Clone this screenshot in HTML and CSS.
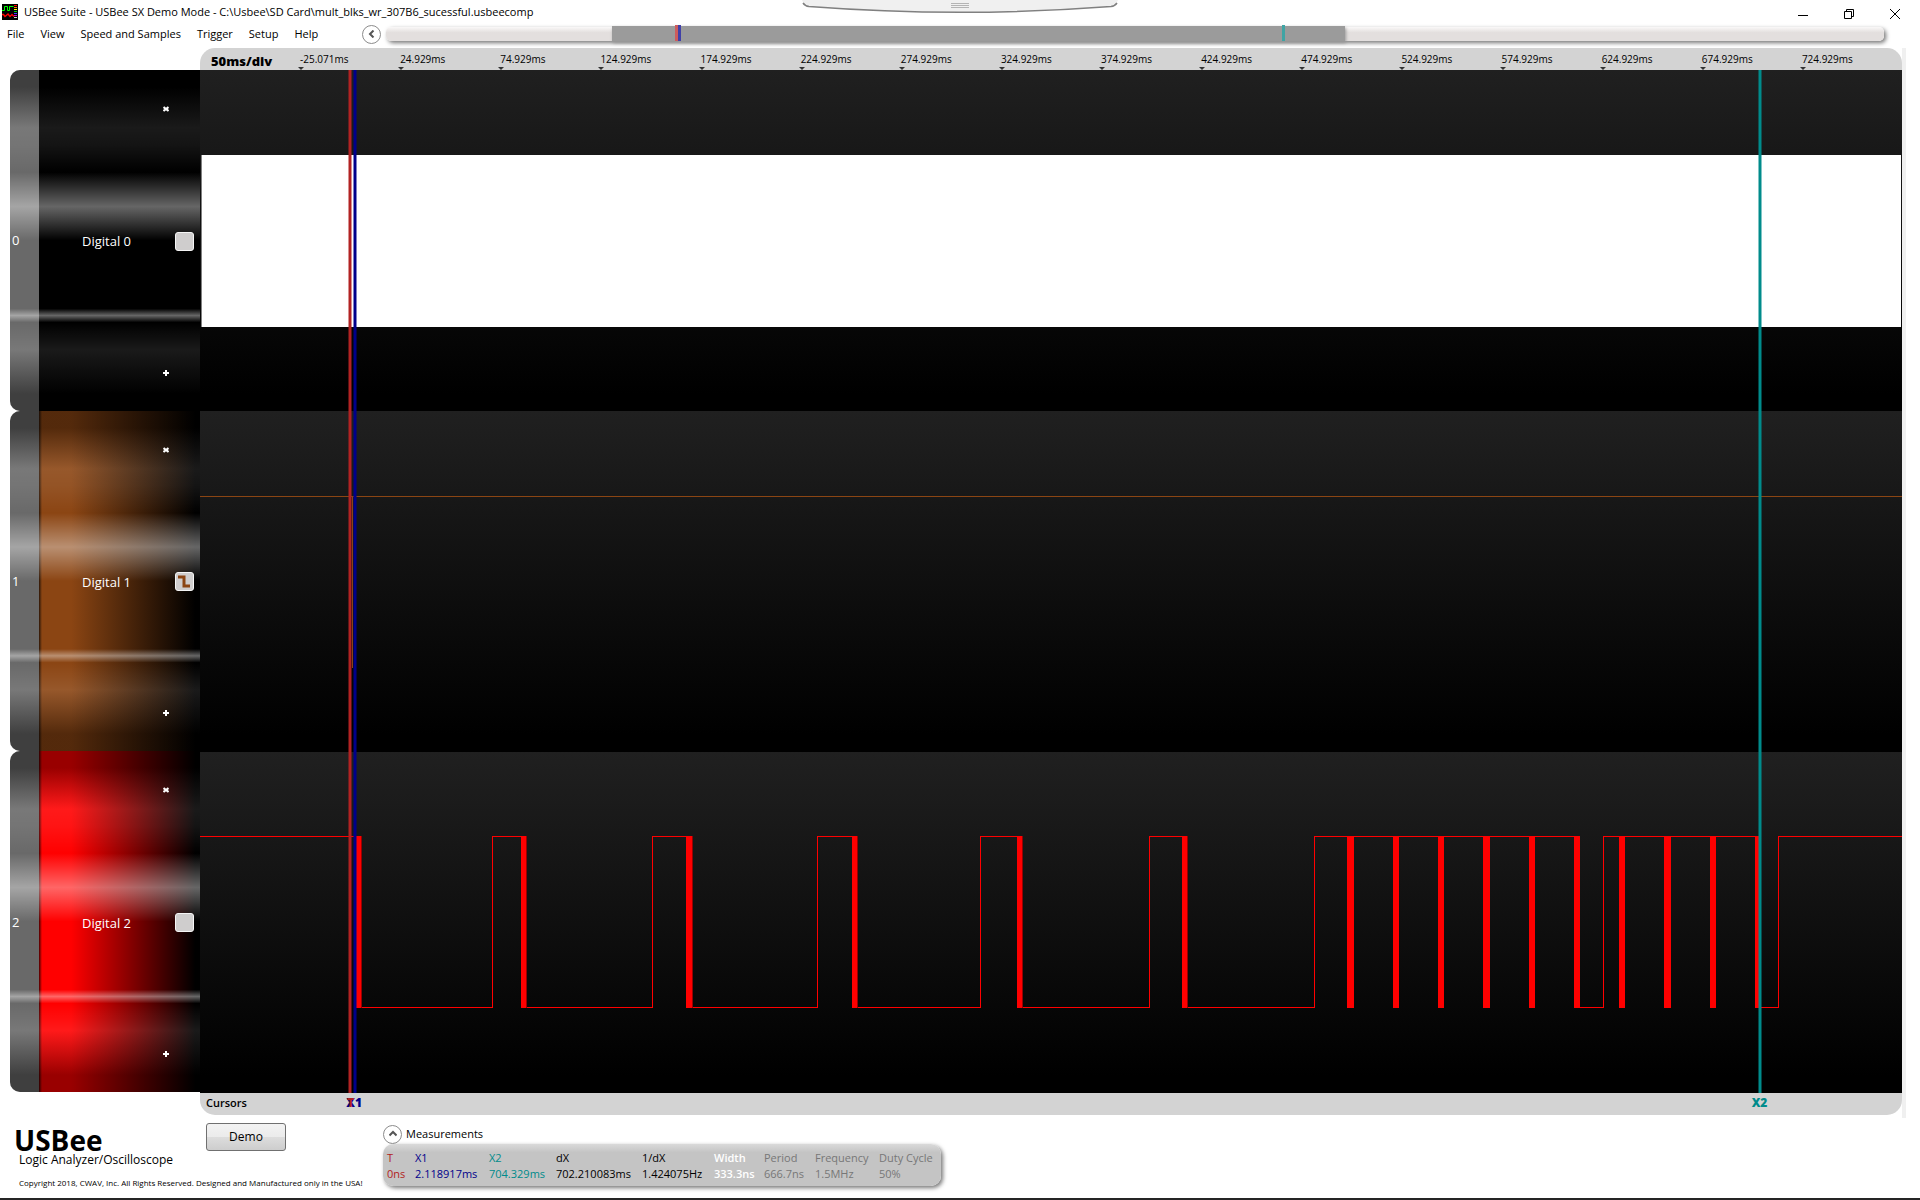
FILE: index.html
```html
<!DOCTYPE html>
<html lang="en">
<head>
<meta charset="utf-8">
<title>USBee Suite</title>
<link rel="stylesheet" href="styles.css">
</head>
<body>
<header class="titlebar">
  <svg class="app-icon" viewBox="0 0 16 16" aria-hidden="true">
    <rect width="16" height="16" fill="#000"/>
    <path d="M0 6.5h2.5v-4h3v4h2v-4h4" fill="none" stroke="#0f0"/>
    <path d="M0 10.500l1.500 0 1.500 2 3-2.500 2 2.500 2-2 2 2" fill="none" stroke="#f00" stroke-width="1.400"/>
    <path d="M12 1.500h3" stroke="#f00"/><path d="M12 3.500h3" stroke="#f80"/><path d="M12 5.500h3" stroke="#ff0"/>
    <path d="M12 7.500h3" stroke="#0c0"/><path d="M12 9.500h3" stroke="#44f"/><path d="M12 11.500h3" stroke="#c0c"/><path d="M12 13.500h3" stroke="#ccc"/>
  </svg>
  <h1 class="title">USBee Suite - USBee SX Demo Mode - C:\Usbee\SD Card\mult_blks_wr_307B6_sucessful.usbeecomp</h1>
  <div class="window-buttons">
    <button class="window-button" aria-label="Minimize"><svg width="12" height="12" viewBox="0 0 12 12"><path d="M1 7.500h10"/></svg></button>
    <button class="window-button" aria-label="Restore"><svg width="12" height="12" viewBox="0 0 12 12"><path d="M1.500 3.500h7v7h-7zM3.500 3v-1.500h7v7h-1.500"/></svg></button>
    <button class="window-button" aria-label="Close"><svg width="12" height="12" viewBox="0 0 12 12"><path d="M1 1l10 10M11 1l-10 10"/></svg></button>
  </div>
  <svg class="pull-tab" width="316" height="14" viewBox="0 0 316 14" aria-hidden="true">
    <path d="M0 0L2 4Q3 6 7 6.500Q158 18 309 6.500Q313 6 314 4L316 0z" fill="#f0f0f0"/>
    <path d="M1 3Q3 6 7 6.500Q158 18 309 6.500Q313 6 315 3" fill="none" stroke="#808080" stroke-width="1.500"/>
    <path d="M149 3.500h18M149 5.500h18M149 7.500h18" stroke="#b4b4b4"/>
  </svg>
</header>

<div class="toolbar">
  <nav class="menu">
    <button class="menu-item">File</button>
    <button class="menu-item">View</button>
    <button class="menu-item">Speed and Samples</button>
    <button class="menu-item">Trigger</button>
    <button class="menu-item">Setup</button>
    <button class="menu-item">Help</button>
  </nav>
  <button class="round-button" aria-label="Collapse overview"><svg width="8" height="8" viewBox="0 0 8 8"><path d="M5.500 0.500L2 4l3.500 3.500"/></svg></button>
  <div class="overview">
    <div class="overview-thumb" style="left:15.1%;width:48.9%"></div>
    <div class="overview-mark mark-t" style="left:19.3%"></div>
    <div class="overview-mark mark-x1" style="left:19.5%"></div>
    <div class="overview-mark mark-x2" style="left:59.8%"></div>
  </div>
</div>

<main class="workspace">
  <section class="channels" aria-label="Channels">
    <div class="channel black">
      <span class="channel-number">0</span>
      <div class="channel-face">
        <button class="size-button" aria-label="Shrink Digital 0"><svg width="6" height="6" viewBox="0 0 6 6"><path d="M.5 1l5 4M.5 5l5-4"/></svg></button>
        <div class="channel-row"><span>Digital 0</span><button class="trigger-button" aria-label="Trigger on Digital 0"></button></div>
        <button class="size-button" aria-label="Grow Digital 0"><svg width="6" height="6" viewBox="0 0 6 6"><path d="M0 3h6M3 0v6"/></svg></button>
      </div>
    </div>
    <div class="channel brown">
      <span class="channel-number">1</span>
      <div class="channel-face">
        <button class="size-button" aria-label="Shrink Digital 1"><svg width="6" height="6" viewBox="0 0 6 6"><path d="M.5 1l5 4M.5 5l5-4"/></svg></button>
        <div class="channel-row"><span>Digital 1</span><button class="trigger-button" aria-label="Trigger on Digital 1"><svg class="edge" width="15" height="15" viewBox="0 0 15 15"><path d="M1 3h6v9h6"/></svg></button></div>
        <button class="size-button" aria-label="Grow Digital 1"><svg width="6" height="6" viewBox="0 0 6 6"><path d="M0 3h6M3 0v6"/></svg></button>
      </div>
    </div>
    <div class="channel red">
      <span class="channel-number">2</span>
      <div class="channel-face">
        <button class="size-button" aria-label="Shrink Digital 2"><svg width="6" height="6" viewBox="0 0 6 6"><path d="M.5 1l5 4M.5 5l5-4"/></svg></button>
        <div class="channel-row"><span>Digital 2</span><button class="trigger-button" aria-label="Trigger on Digital 2"></button></div>
        <button class="size-button" aria-label="Grow Digital 2"><svg width="6" height="6" viewBox="0 0 6 6"><path d="M0 3h6M3 0v6"/></svg></button>
      </div>
    </div>
  </section>

  <section class="scope" aria-label="Waveforms">
    <div class="ruler">
      <strong class="scale">50ms/div</strong>
      <span class="tick">-25.071ms</span><span class="tick">24.929ms</span><span class="tick">74.929ms</span><span class="tick">124.929ms</span>
      <span class="tick">174.929ms</span><span class="tick">224.929ms</span><span class="tick">274.929ms</span><span class="tick">324.929ms</span>
      <span class="tick">374.929ms</span><span class="tick">424.929ms</span><span class="tick">474.929ms</span><span class="tick">524.929ms</span>
      <span class="tick">574.929ms</span><span class="tick">624.929ms</span><span class="tick">674.929ms</span><span class="tick">724.929ms</span>
    </div>
    <div class="plot">
      <svg class="lane" viewBox="0 0 1702 341" preserveAspectRatio="none">
        <rect x="1" y="85" width="1700" height="172" fill="#808080"/>
        <rect x="2" y="85" width="1699" height="172" fill="#fff"/>
      </svg>
      <svg class="lane" viewBox="0 0 1702 341" preserveAspectRatio="none">
        <path class="wave wave-brown" d="M0 85.500H152.500V256.500V85.500H1702"/>
      </svg>
      <svg class="lane" viewBox="0 1 1702 341" preserveAspectRatio="none">
        <path class="wave wave-red" d="M0 85.500H156.500V256.500H292.500V85.500H321.500V256.500H452.500V85.500H486.500V256.500H617.500V85.500H652.500V256.500H780.500V85.500H817.500V256.500H949.500V85.500H982.500V256.500H1114.500V85.500H1379.500V256.500H1403.500V85.500H1558.500V256.500H1578.500V85.500H1702"/>
        <path class="tail" d="M161 85h1v172h-1zM326 85h1v172h-1zM492 85h1v172h-1zM657 85h1v172h-1zM822 85h1v172h-1zM987 85h1v172h-1z"/>
        <path class="burst" d="M156 85h5v172h-5zM321 85h5v172h-5zM486 85h6v172h-6zM652 85h5v172h-5zM817 85h5v172h-5zM982 85h5v172h-5zM1147 85h7v172h-7zM1193 85h6v172h-6zM1238 85h6v172h-6zM1283 85h7v172h-7zM1329 85h6v172h-6zM1374 85h6v172h-6zM1419 85h6v172h-6zM1464 85h7v172h-7zM1510 85h6v172h-6zM1555 85h4v172h-4z"/>
      </svg>
      <div class="cursor cursor-x1" style="left:9.08%"></div>
      <div class="cursor cursor-t" style="left:8.84%"></div>
      <div class="cursor cursor-x2" style="left:91.63%"></div>
    </div>
    <div class="cursor-bar">
      <span>Cursors</span>
      <b class="cursor-label label-x1" style="left:9.06%">X1</b>
      <b class="cursor-label label-t" style="left:8.84%">T</b>
      <b class="cursor-label label-x2" style="left:91.63%">X2</b>
    </div>
  </section>
</main>

<footer class="footer">
  <div class="brand">
    <div class="brand-name">USBee</div>
    <div class="brand-line">Logic Analyzer/Oscilloscope</div>
    <small class="copyright">Copyright 2018, CWAV, Inc. All Rights Reserved. Designed and Manufactured only in the USA!</small>
  </div>
  <button class="demo-button">Demo</button>
  <section class="measurements">
    <div class="measurements-head">
      <button class="round-button" aria-label="Collapse measurements"><svg width="8" height="8" viewBox="0 0 8 8"><path d="M0.500 5.500L4 2l3.500 3.500"/></svg></button>
      <span>Measurements</span>
    </div>
    <div class="measurements-panel">
      <table class="measure-table">
        <colgroup><col class="w-t"><col class="w-x1"><col class="w-x2"><col class="w-dx"><col class="w-inv"><col class="w-width"><col class="w-period"><col class="w-freq"><col class="w-duty"></colgroup>
        <thead><tr><th class="c-t">T</th><th class="c-x1">X1</th><th class="c-x2">X2</th><th>dX</th><th>1/dX</th><th class="c-width">Width</th><th class="c-dim">Period</th><th class="c-dim">Frequency</th><th class="c-dim">Duty Cycle</th></tr></thead>
        <tbody><tr><td class="c-t">0ns</td><td class="c-x1">2.118917ms</td><td class="c-x2">704.329ms</td><td>702.210083ms</td><td>1.424075Hz</td><td class="c-width">333.3ns</td><td class="c-dim">666.7ns</td><td class="c-dim">1.5MHz</td><td class="c-dim">50%</td></tr></tbody>
      </table>
    </div>
  </section>
</footer>
</body>
</html>
```
FILE: styles.css
```css
* { box-sizing: border-box; }

body {
  margin: 0;
  min-height: 100vh;
  display: flex;
  flex-direction: column;
  background: #fff;
  color: #000;
  font-family: "Open Sans", "Noto Sans", sans-serif;
  font-size: 11px;
  line-height: 16px;
  border-bottom: 2px solid #252525;
}

button {
  font: inherit;
  color: inherit;
  padding: 0;
  border: 0;
  background: none;
}

svg { display: block; }

/* Title bar */
.titlebar {
  position: relative;
  display: flex;
  align-items: center;
  gap: 6px;
  height: 24px;
  padding: 0 2px;
}
.app-icon { width: 16px; height: 16px; }
.title { margin: 0; font-size: 11px; font-weight: 400; flex: 1; }
.window-buttons { display: flex; align-self: flex-end; }
.window-button {
  width: 46px;
  height: 20px;
  display: flex;
  align-items: center;
  justify-content: center;
}
.window-button path { fill: none; stroke: #000; }
.pull-tab { position: absolute; top: 0; left: 50%; transform: translateX(-50%); }

/* Menu and overview strip */
.toolbar {
  display: flex;
  align-items: center;
  height: 24px;
  padding: 0 36px 4px 7px;
}
.menu { display: flex; gap: 16px; width: 355px; }
.round-button {
  width: 19px;
  height: 19px;
  flex: none;
  display: flex;
  align-items: center;
  justify-content: center;
  border: 1px solid #8c8c8c;
  border-radius: 50%;
}
.round-button path { fill: none; stroke: #555; stroke-width: 2; }
.overview {
  position: relative;
  flex: 1;
  height: 14px;
  margin-left: 5px;
  border-radius: 5px;
  background: linear-gradient(#faf8f8, #e3dfde 40%);
  box-shadow: 2px 2px 4px #777;
}
.overview-thumb {
  position: absolute;
  top: -1px;
  bottom: 0;
  background: #9b9b9b;
  box-shadow: 1px 2px 3px #999;
}
.overview-mark { position: absolute; top: -2px; bottom: 0; width: 3px; }
.mark-t { background: #cd5c5c; }
.mark-x1 { background: #4040a8; }
.mark-x2 { background: #40a4a4; }

/* Workspace */
.workspace {
  flex: 1;
  display: grid;
  grid-template-columns: 190px 1fr;
  padding: 0 14px 0 10px;
}
.channels {
  display: grid;
  grid-template-rows: repeat(3, 1fr);
  padding: 22px 0 26px;
}
.channel {
  display: grid;
  grid-template-columns: 29px 1fr;
  position: relative;
  overflow: hidden;
  border-radius: 10px 0 0 10px;
  color: #fff;
  font-size: 13px;
  background: #696969;
}
.channel::before {
  content: "";
  position: absolute;
  inset: 0;
  background: linear-gradient(
    rgba(0,0,0,.4) 5%, rgba(255,255,255,.1) 17%, rgba(255,255,255,.08) 22%, rgba(255,255,255,0) 30%,
    rgba(255,255,255,.4) 40%, rgba(255,255,255,0) 50%, rgba(255,255,255,0) 70%,
    rgba(255,255,255,.4) 72%, rgba(255,255,255,0) 74%, rgba(255,255,255,.1) 82%,
    rgba(0,0,0,.4) 95%);
}
.channel-number, .channel-face > * { position: relative; }
.channel-number { align-self: center; padding-left: 2px; }
.channel-face {
  display: grid;
  grid-template-rows: 78px 1fr 76px;
  align-items: center;
}
.black .channel-face { background: #000; }
.brown .channel-face { background: linear-gradient(90deg, #2a1506, #8b4513 3px, #8b4513 20%, #000 97%); }
.red .channel-face { background: linear-gradient(90deg, #400, #f00 3px, #f00 20%, #000 97%); }
.channel-row {
  display: flex;
  align-items: center;
  justify-content: space-between;
  padding: 0 6px 0 43px;
}
.size-button {
  justify-self: end;
  width: 16px;
  height: 16px;
  margin-right: 26px;
  display: grid;
  place-items: center;
}
.size-button path { fill: none; stroke: #fff; stroke-width: 2; }
.trigger-button {
  width: 19px;
  height: 19px;
  display: grid;
  place-items: center;
  border: 1px solid #f5f5f5;
  border-radius: 3px;
  background: #cfcdcd;
}
.edge path { fill: none; stroke: #8b4513; stroke-width: 3; }

/* Waveforms */
.scope {
  display: flex;
  flex-direction: column;
  padding-bottom: 3px;
  border-right: 4px solid #f0f0f0;
}
.ruler {
  display: grid;
  grid-template-columns: 100px repeat(16, 1fr);
  grid-template-rows: 22px;
  border-radius: 15px 15px 0 0;
  background: #d3d3d3;
}
.scale { padding-left: 11px; font-size: 13px; font-weight: 800; line-height: 26px; }
.tick { position: relative; font-size: 10px; line-height: 22px; }
.tick::after {
  content: "";
  position: absolute;
  left: -2px;
  bottom: 0;
  border: 3px solid transparent;
  border-top-color: #333;
  border-bottom: 0;
}
.plot {
  position: relative;
  flex: 1;
  display: grid;
  grid-template-rows: repeat(3, 1fr);
}
.lane {
  width: 100%;
  height: 100%;
  min-height: 0;
  background: linear-gradient(#202020, #000 95%);
  shape-rendering: crispEdges;
}
.wave { fill: none; stroke-width: 1; vector-effect: non-scaling-stroke; }
.wave-brown { stroke: #8b4513; }
.wave-red { stroke: #f00; }
.burst { fill: #f00; }
.tail { fill: #900; }
.cursor { position: absolute; top: 0; bottom: 0; width: 3px; transform: translateX(-50%); }
.cursor-t { background: #b22222; }
.cursor-x1 { background: #00008b; }
.cursor-x2 { background: #008b8b; }
.cursor-bar {
  position: relative;
  height: 22px;
  padding-left: 6px;
  border-radius: 0 0 15px 15px;
  background: #d3d3d3;
  font-weight: 600;
  line-height: 20px;
}
.cursor-label { position: absolute; top: 0; font-size: 12px; transform: translateX(-50%); }
.label-t { color: #b22222; }
.label-x1 { color: #00008b; }
.label-x2 { color: #008b8b; }

/* Footer */
.footer {
  display: flex;
  align-items: flex-start;
  height: 80px;
}
.brand { width: 206px; padding: 9px 0 0 14px; white-space: nowrap; }
.brand-name { font-size: 28px; font-weight: 700; line-height: 26px; }
.brand-line { padding-left: 5px; font-size: 12px; line-height: 14px; }
.copyright { display: block; padding: 8px 0 0 5px; font-size: 8px; line-height: 16px; }
.demo-button {
  width: 80px;
  height: 28px;
  margin-top: 5px;
  border: 1px solid #707070;
  border-radius: 3px;
  background: linear-gradient(#f3f3f3, #ebebeb 50%, #ddd 50%, #cdcdcd);
  font-size: 12px;
}
.measurements { margin: 6px 0 0 97px; }
.measurements-head { display: flex; align-items: center; gap: 4px; height: 20px; }
.measurements-panel {
  padding: 6px 0 4px 4px;
  border-radius: 10px;
  background: linear-gradient(#dadada, #c4c4c4 20%);
  box-shadow: 2px 2px 4px #777;
}
.measure-table { table-layout: fixed; width: 554px; border-collapse: collapse; }
.measure-table th, .measure-table td {
  padding: 0;
  font-weight: 400;
  text-align: left;
  white-space: nowrap;
}
.w-t { width: 28px; }
.w-x1 { width: 74px; }
.w-x2 { width: 67px; }
.w-dx { width: 86px; }
.w-inv { width: 72px; }
.w-width { width: 50px; }
.w-period { width: 51px; }
.w-freq { width: 64px; }
.w-duty { width: 62px; }
.c-t { color: #b22222; }
.c-x1 { color: #00008b; }
.c-x2 { color: #008b8b; }
.measure-table .c-width { color: #fff; font-weight: 600; }
.c-dim { color: #777; }
```
